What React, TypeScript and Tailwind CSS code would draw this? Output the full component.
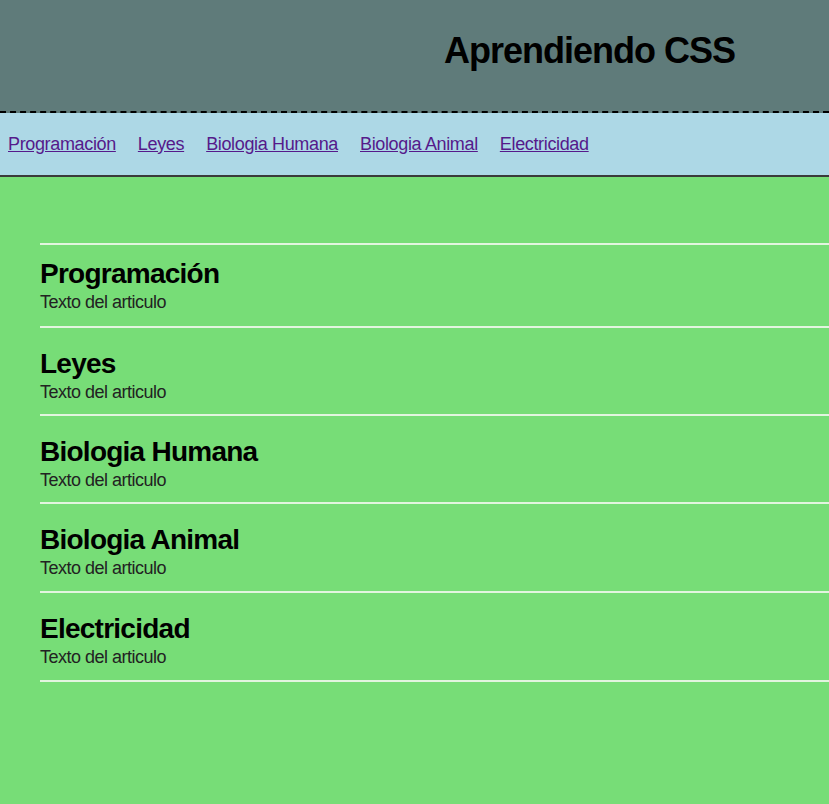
const temas = ["Programación", "Leyes", "Biologia Humana", "Biologia Animal", "Electricidad"];

export default function App() {
  return (
    <div className="min-h-[804px] bg-[#77dd77] font-['Liberation_Sans',Arial,sans-serif]">
      {/* cabecera */}
      <header className="bg-[#5f7b7a] border-b-2 border-dashed border-black pt-[30px] pb-[40px] pl-[444px]">
        <h1 className="text-[36px] leading-[41px] font-bold text-black tracking-[-1px] whitespace-nowrap">
          Aprendiendo CSS
        </h1>
      </header>

      {/* menu */}
      <nav className="bg-[#add8e6] border-b-2 border-[#3a3a3a] pt-[21px] pb-[20px] pl-2 flex gap-[22px]">
        {temas.map((t) => (
          <a
            key={t}
            href="#"
            className="text-[18px] leading-[21px] text-[#551a8b] underline tracking-[-0.35px] whitespace-nowrap"
          >
            {t}
          </a>
        ))}
      </nav>

      {/* articulos */}
      <main className="ml-10 mt-[66px] border-b-2 border-[#e2f5df]">
        {temas.map((t, i) => (
          <article
            key={t}
            className={
              i === 0
                ? "border-t-2 border-[#e2f5df] pt-[12px] pb-[13px]"
                : i >= 3
                ? "border-t-2 border-[#e2f5df] pt-[19px] pb-[12px]"
                : "border-t-2 border-[#e2f5df] pt-[19px] pb-[11px]"
            }
          >
            <h2 className="text-[28px] leading-[34px] font-bold text-black tracking-[-0.75px]">{t}</h2>
            <p className="mt-[1px] text-[18px] leading-[21px] text-[#222] tracking-[-0.5px]">Texto del articulo</p>
          </article>
        ))}
      </main>
    </div>
  );
}
